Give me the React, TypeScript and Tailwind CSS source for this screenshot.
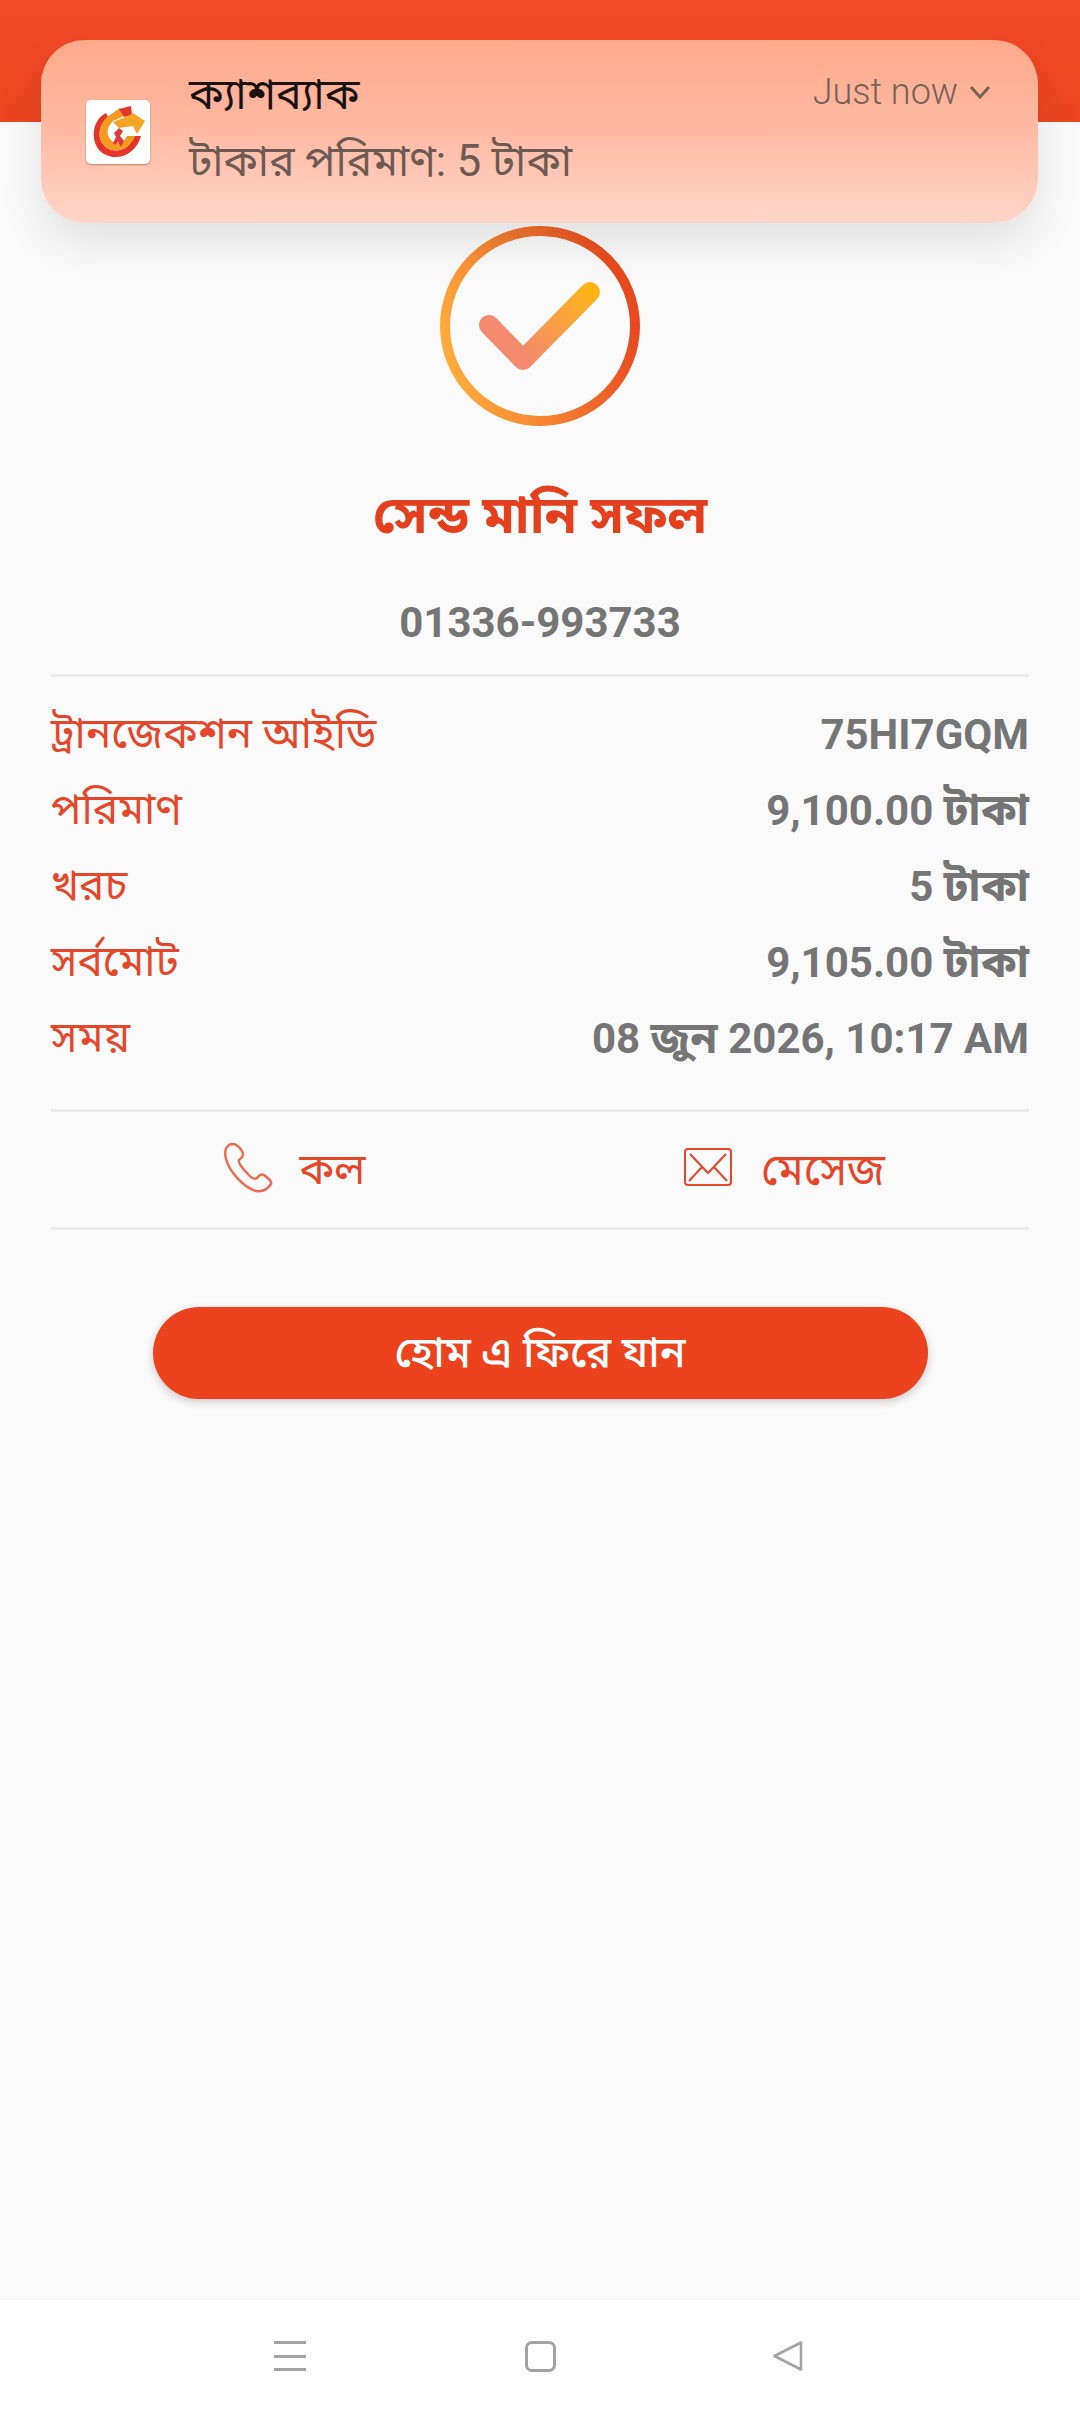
import React from 'react';

const rows = [
  { label: 'ট্রানজেকশন আইডি', value: ['75HI7GQM'] },
  { label: 'পরিমাণ', value: ['9,100.00 ', 'টাকা'] },
  { label: 'খরচ', value: ['5 ', 'টাকা'] },
  { label: 'সর্বমোট', value: ['9,105.00 ', 'টাকা'] },
  { label: 'সময়', value: ['08 ', 'জুন', ' 2026, 10:17 AM'] },
];

const AppLogo = () => (
  <svg viewBox="0 0 64 64" className="w-[64px] h-[64px] rounded-[5px] bg-white shadow-[0_1px_2px_rgba(90,50,30,0.45)]">
    <path d="M20 13 C4 21 4 46 18 54 C32 62 50 54 55 36 L48 36 C44 49 31 54 21 48 C11 41 11 26 22 17 Z" fill="#e5352a" />
    <path d="M34 8 L21 17 C11 27 11 41 21 48 C32 54 45 48 49 36 L41 36 C38 43 31 45 26 41 C20 36 20 27 27 21 L38 16 Z" fill="#f39a1f" />
    <path d="M33 9 L45 6 L46 15 L38 17 Z" fill="#e5352a" />
    <path d="M27 22 L42 16 L47 13 L59 21 L51 34 L47 26 L33 28 Z" fill="#f5a523" />
    <path d="M33 28 L37 31 L34 36 L38 41 L35 47 L32 42 L29 45 L27 43 L30 37 L28 33 Z" fill="#dc3b3b" />
  </svg>
);

const CheckCircle = () => (
  <svg viewBox="0 0 200 200" className="w-[200px] h-[200px]">
    <defs>
      <linearGradient id="ring" x1="0" y1="0.8" x2="1" y2="0.5">
        <stop offset="0" stopColor="#ffb03f" />
        <stop offset="1" stopColor="#e8491f" />
      </linearGradient>
      <linearGradient id="tick" gradientUnits="userSpaceOnUse" x1="60" y1="140" x2="150" y2="60">
        <stop offset="0.2" stopColor="#f48a70" />
        <stop offset="1" stopColor="#fdb515" />
      </linearGradient>
    </defs>
    <circle cx="100" cy="100" r="95" fill="none" stroke="url(#ring)" strokeWidth="10" />
    <path d="M49 99 L83 134 L150 66" fill="none" stroke="url(#tick)" strokeWidth="20" strokeLinecap="round" strokeLinejoin="round" />
  </svg>
);

export default function App() {
  return (
    <div className="relative w-[1080px] h-[2412px] overflow-hidden bg-[#fafafa] font-['Roboto','Noto_Sans','Noto_Sans_Bengali',sans-serif]">
      <div className="h-[122px] bg-gradient-to-b from-[#f24b27] to-[#eb4620]" />

      {/* heads-up notification */}
      <div className="absolute left-[41px] top-[40px] w-[997px] h-[183px] rounded-[44px] bg-gradient-to-b from-[#ffa98c] via-[#ffbba3] to-[#ffd5c9] shadow-[0_20px_45px_rgba(0,0,0,0.10)] flex items-center pl-[45px] pr-[46px]">
        <AppLogo />
        <div className="ml-[39px] flex-1 self-start pt-[29px]">
          <div className="text-[43px] leading-[50px] text-[#1a1210]">ক্যাশব্যাক</div>
          <div className="mt-[17px] text-[42.5px] leading-[50px] text-[#6e5a52]">টাকার পরিমাণ: <span className="text-[44px]">5</span> টাকা</div>
        </div>
        <div className="self-start pt-[30px] flex items-center gap-[10px] text-[#776258]">
          <span className="text-[36px] leading-[44px] font-light">Just now</span>
          <svg viewBox="0 0 24 24" className="w-[24px] h-[24px]" fill="none" stroke="currentColor" strokeWidth="3">
            <path d="M3 7 L12 17 L21 7" />
          </svg>
        </div>
      </div>

      <div className="flex flex-col items-center pt-[104px]">
        <CheckCircle />
        <h1 className="mt-[59px] text-[52.5px] leading-[60px] font-bold text-[#e4401f]">সেন্ড মানি সফল</h1>
        <div className="mt-[53px] text-[42px] leading-[50px] font-bold text-[#757575]">01336-993733</div>
      </div>

      <div className="mx-[51px] mt-[26px] border-t-[3px] border-[#ebebeb] pt-[19px] pb-[33px] flex flex-col">
        {rows.map(row => (
          <div key={row.label} className="h-[76px] flex items-center justify-between">
            <span className="text-[42.5px] text-[#e4472a]">{row.label}</span>
            <span className="text-[42px] font-bold text-[#757575] whitespace-pre">
              {row.value.map((part, i) => (
                <span key={i} className={i % 2 === 1 ? 'text-[44px]' : ''}>{part}</span>
              ))}
            </span>
          </div>
        ))}
      </div>

      <div className="mx-[51px] h-[121px] border-y-[3px] border-[#ebebeb] grid grid-cols-2">
        <div className="flex items-center justify-center gap-[26px] pr-[2px]">
          <svg viewBox="0 0 50 50" className="w-[50px] h-[50px] -mt-[4px]" fill="none" stroke="#ea6a52" strokeWidth="2.4">
            <path d="M6 2 C3 4 1 8 3 16 C6 27 19 44 33 48 C38 49 44 47 48 41 C49 38 46 36 41 32 C39 31 37 31 34 35 C31 37 28 35 24 30 C18 24 15 20 16 17 C20 14 21 12 19 8 C16 3 11 -1 6 2 Z" />
          </svg>
          <span className="text-[43px] text-[#e4472a]">কল</span>
        </div>
        <div className="flex items-center justify-center gap-[29px]">
          <svg viewBox="0 0 48 38" className="w-[48px] h-[38px] -mt-[6px]" fill="none" stroke="#e4472a" strokeWidth="2">
            <rect x="1" y="1" width="46" height="36" rx="3" />
            <path d="M6 6 L24 25 L42 6 M5 33 L18 19 M43 33 L30 19" />
          </svg>
          <span className="text-[44px] text-[#e4472a]">মেসেজ</span>
        </div>
      </div>

      <div className="mt-[77px] flex justify-center">
        <button className="w-[775px] h-[92px] rounded-full bg-[#ea431e] text-white text-[42.5px] font-medium shadow-[0_3px_8px_rgba(0,0,0,0.2)]">হোম এ ফিরে যান</button>
      </div>

      {/* android nav bar */}
      <div className="absolute left-0 right-0 bottom-0 h-[112px] bg-white grid grid-cols-3">
        <div className="flex items-center justify-end pr-[54px]">
          <div className="w-[32px] h-[30px] flex flex-col justify-between">
            <div className="h-[3px] bg-[#a3a3a3]" />
            <div className="h-[3px] bg-[#a3a3a3]" />
            <div className="h-[3px] bg-[#a3a3a3]" />
          </div>
        </div>
        <div className="flex items-center justify-center">
          <div className="w-[31px] h-[31px] rounded-[7px] border-[3px] border-[#a3a3a3]" />
        </div>
        <div className="flex items-center pl-[52px]">
          <svg viewBox="0 0 32 32" className="w-[32px] h-[32px]" fill="none" stroke="#a3a3a3" strokeWidth="2.6" strokeLinejoin="round">
            <path d="M29 2.5 L29 29.5 L2.5 16 Z" />
          </svg>
        </div>
      </div>
    </div>
  );
}
